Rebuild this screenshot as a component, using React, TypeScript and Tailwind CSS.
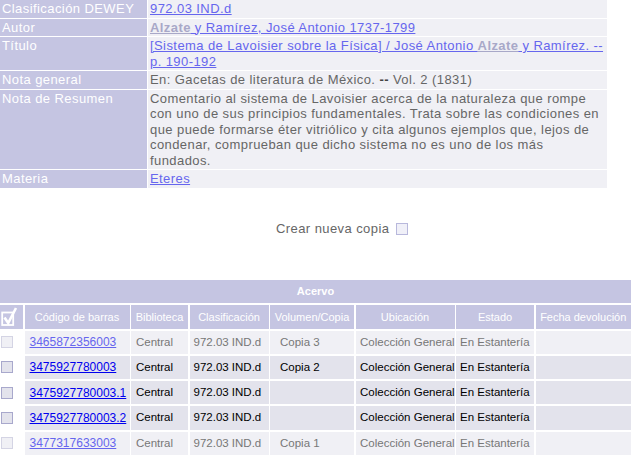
import React from "react";

const L = "text-[#6666ee] underline";

function Alz() {
  return <span className="font-bold text-[#a8a8c8] underline">Alzate</span>;
}

const top: { label: string; value: React.ReactNode }[] = [
  { label: "Clasificación DEWEY", value: <a className={L}>972.03 IND.d</a> },
  {
    label: "Autor",
    value: (
      <a className={L}>
        <Alz /> y Ramírez, José Antonio 1737-1799
      </a>
    ),
  },
  {
    label: "Título",
    value: (
      <a className={L}>
        [Sistema de Lavoisier sobre la Física] / José Antonio <Alz /> y Ramírez. --
        <br />
        p. 190-192
      </a>
    ),
  },
  {
    label: "Nota general",
    value: (
      <span>
        En: Gacetas de literatura de México. <b className="text-[#444]">--</b> Vol. 2 (1831)
      </span>
    ),
  },
  {
    label: "Nota de Resumen",
    value: (
      <span>
        Comentario al sistema de Lavoisier acerca de la naturaleza que rompe
        <br />
        con uno de sus principios fundamentales. Trata sobre las condiciones en
        <br />
        que puede formarse éter vitriólico y cita algunos ejemplos que, lejos de
        <br />
        condenar, comprueban que dicho sistema no es uno de los más
        <br />
        fundados.
      </span>
    ),
  },
  { label: "Materia", value: <a className={L}>Eteres</a> },
];

type Row = { code: string; vol: string; active: boolean };
const rows: Row[] = [
  { code: "3465872356003", vol: "Copia 3", active: false },
  { code: "3475927780003", vol: "Copia 2", active: true },
  { code: "3475927780003.1", vol: "", active: true },
  { code: "3475927780003.2", vol: "", active: true },
  { code: "3477317633003", vol: "Copia 1", active: false },
];

const heads = [
  "Código de barras",
  "Biblioteca",
  "Clasificación",
  "Volumen/Copia",
  "Ubicación",
  "Estado",
  "Fecha devolución",
];

export default function App() {
  return (
    <div className="w-[631px] h-[457px] overflow-hidden bg-white font-['Liberation_Sans',Arial,sans-serif]">
      <div className="grid grid-cols-[147px_459px] gap-px w-[607px] text-[13px] leading-[15.5px] tracking-[0.42px]">
        {top.map((r) => (
          <React.Fragment key={r.label}>
            <div className="bg-[#c5c5e2] text-white px-[2px] py-px whitespace-nowrap">{r.label}</div>
            <div className="bg-[#f0f0f5] text-[#666] pl-[2px] py-px whitespace-nowrap overflow-hidden">
              {r.value}
            </div>
          </React.Fragment>
        ))}
      </div>

      <div className="mt-[33px] h-[17px] pl-[276px] flex items-center gap-[7px] text-[13px] text-[#666] tracking-[0.42px]">
        <span>Crear nueva copia</span>
        <span className="w-[12px] h-[12px] border border-[#b8b8dc] bg-[#f0f0f8]" />
      </div>

      <div className="mt-[42px] grid grid-cols-[23px_105px_57px_79px_84px_99px_78px_1fr] gap-x-[1.5px] gap-y-[2px] w-[631px]">
        <div className="col-span-8 h-[23.5px] bg-[#c5c5e2] flex items-center justify-center text-white font-bold text-[11px]">
          Acervo
        </div>
        <div className="h-[23.5px] bg-[#c5c5e2] flex items-center">
          <svg width="18" height="21" viewBox="0 0 18 21" className="ml-px">
            <rect x="1.2" y="6.5" width="11" height="12.5" fill="none" stroke="white" strokeWidth="1.8" />
            <path d="M3.5 11.5 L7.2 17 L15 2" fill="none" stroke="white" strokeWidth="2.6" />
          </svg>
        </div>
        {heads.map((h) => (
          <div
            key={h}
            className="h-[23.5px] bg-[#c5c5e2] flex items-center justify-center text-white text-[11px] whitespace-nowrap overflow-hidden"
          >
            {h}
          </div>
        ))}
        {rows.map((r, i) => {
          const bg = r.active ? "bg-[#e3e3ec]" : "bg-[#f0f0f5]";
          const tc = r.active ? "text-black" : "text-[#777]";
          const lc = r.active ? "text-[#0000ee]" : "text-[#6666ee]";
          const cell = `h-[23.3px] ${bg} ${tc} flex items-center text-[11.5px] whitespace-nowrap overflow-hidden`;
          return (
            <React.Fragment key={i}>
              <div className="h-[23.3px] bg-white flex items-center pl-px">
                <span
                  className={`w-[12px] h-[12px] border ${
                    r.active ? "border-[#a8a8cc] bg-[#e3e3ec]" : "border-[#d4d4e4] bg-[#f0f0f5]"
                  }`}
                />
              </div>
              <div className={`${cell} pl-[5px]`}>
                <a className={`${lc} underline text-[12px]`}>{r.code}</a>
              </div>
              <div className={`${cell} pl-[5px]`}>Central</div>
              <div className={`${cell} pl-[4px]`}>972.03 IND.d</div>
              <div className={`${cell} pl-[10px]`}>{r.vol}</div>
              <div className={`${cell} pl-[4.5px]`}>Colección General</div>
              <div className={`${cell} pl-[4px]`}>En Estantería</div>
              <div className={cell} />
            </React.Fragment>
          );
        })}
      </div>
    </div>
  );
}
